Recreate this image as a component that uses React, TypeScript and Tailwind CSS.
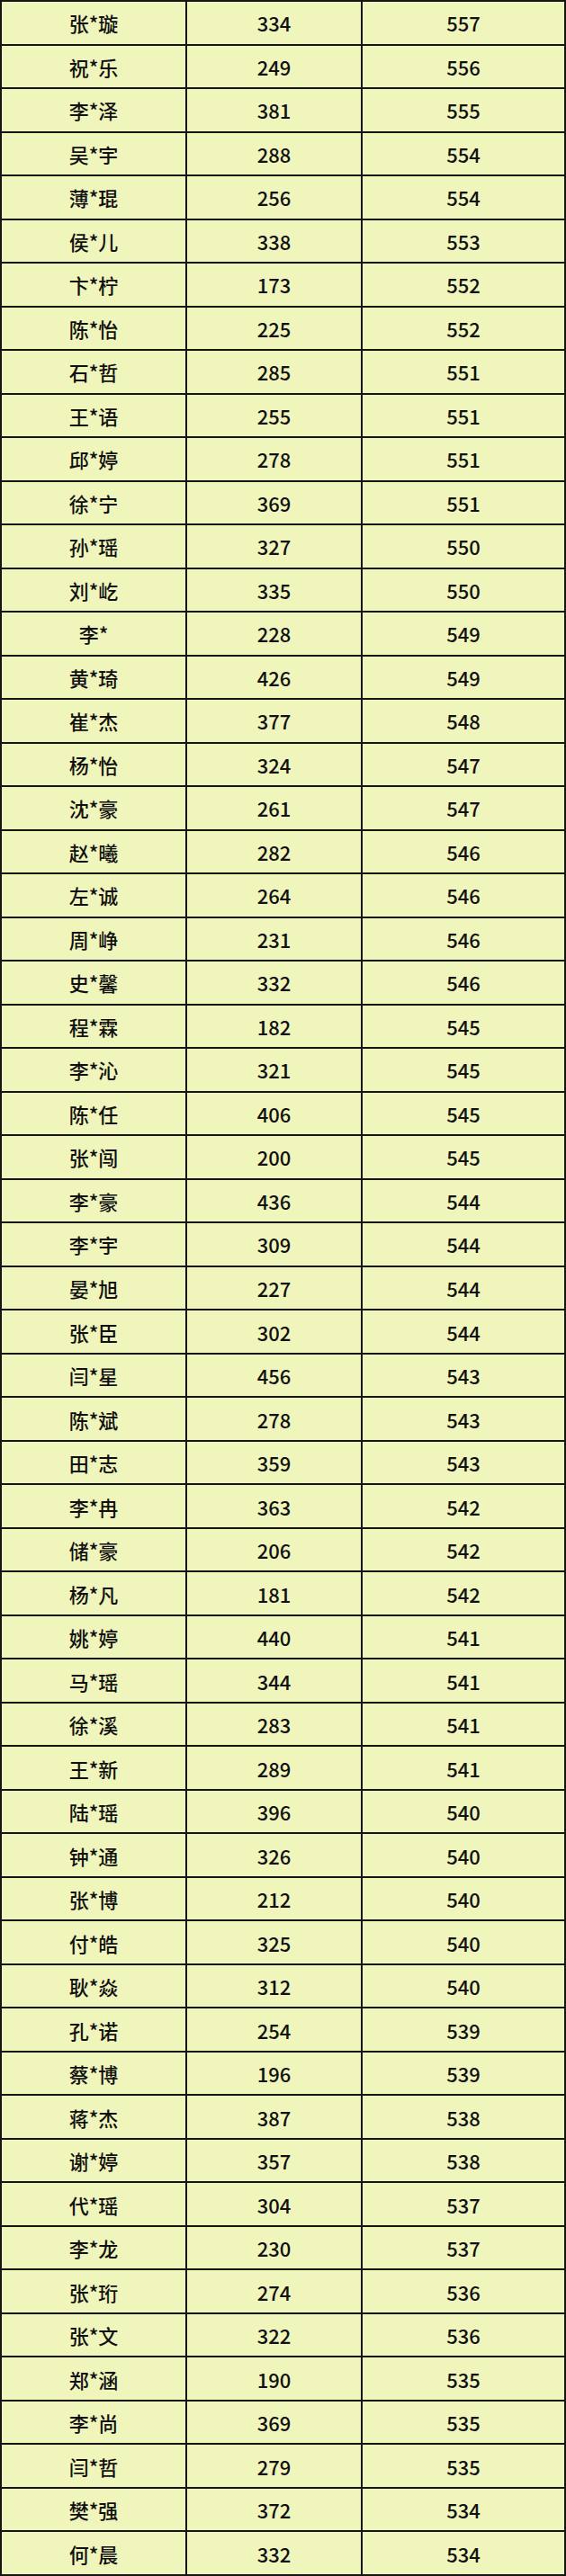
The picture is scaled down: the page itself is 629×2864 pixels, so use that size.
import React from "react";

const rows: [string, number, number][] = [
  ["张*璇", 334, 557],
  ["祝*乐", 249, 556],
  ["李*泽", 381, 555],
  ["吴*宇", 288, 554],
  ["薄*琨", 256, 554],
  ["侯*儿", 338, 553],
  ["卞*柠", 173, 552],
  ["陈*怡", 225, 552],
  ["石*哲", 285, 551],
  ["王*语", 255, 551],
  ["邱*婷", 278, 551],
  ["徐*宁", 369, 551],
  ["孙*瑶", 327, 550],
  ["刘*屹", 335, 550],
  ["李*", 228, 549],
  ["黄*琦", 426, 549],
  ["崔*杰", 377, 548],
  ["杨*怡", 324, 547],
  ["沈*豪", 261, 547],
  ["赵*曦", 282, 546],
  ["左*诚", 264, 546],
  ["周*峥", 231, 546],
  ["史*馨", 332, 546],
  ["程*霖", 182, 545],
  ["李*沁", 321, 545],
  ["陈*任", 406, 545],
  ["张*闯", 200, 545],
  ["李*豪", 436, 544],
  ["李*宇", 309, 544],
  ["晏*旭", 227, 544],
  ["张*臣", 302, 544],
  ["闫*星", 456, 543],
  ["陈*斌", 278, 543],
  ["田*志", 359, 543],
  ["李*冉", 363, 542],
  ["储*豪", 206, 542],
  ["杨*凡", 181, 542],
  ["姚*婷", 440, 541],
  ["马*瑶", 344, 541],
  ["徐*溪", 283, 541],
  ["王*新", 289, 541],
  ["陆*瑶", 396, 540],
  ["钟*通", 326, 540],
  ["张*博", 212, 540],
  ["付*皓", 325, 540],
  ["耿*焱", 312, 540],
  ["孔*诺", 254, 539],
  ["蔡*博", 196, 539],
  ["蒋*杰", 387, 538],
  ["谢*婷", 357, 538],
  ["代*瑶", 304, 537],
  ["李*龙", 230, 537],
  ["张*珩", 274, 536],
  ["张*文", 322, 536],
  ["郑*涵", 190, 535],
  ["李*尚", 369, 535],
  ["闫*哲", 279, 535],
  ["樊*强", 372, 534],
  ["何*晨", 332, 534],
];

const cell =
  "flex items-center justify-center border-r-2 border-b-2 border-[#151515] text-[22px] font-medium leading-none text-[#111]";

export default function App() {
  return (
    <div className="w-[629px] h-[2864px] bg-[#eff5bb] font-['Noto_Sans_CJK_SC',sans-serif]">
      <div className="grid h-full grid-cols-[206px_195px_1fr] grid-rows-[repeat(59,minmax(0,1fr))] border-t-2 border-l-2 border-[#151515]">
        {rows.map(([name, a, b], i) => (
          <React.Fragment key={i}>
            <div className={cell}>{name}</div>
            <div className={cell}>{a}</div>
            <div className={cell}>{b}</div>
          </React.Fragment>
        ))}
      </div>
    </div>
  );
}
